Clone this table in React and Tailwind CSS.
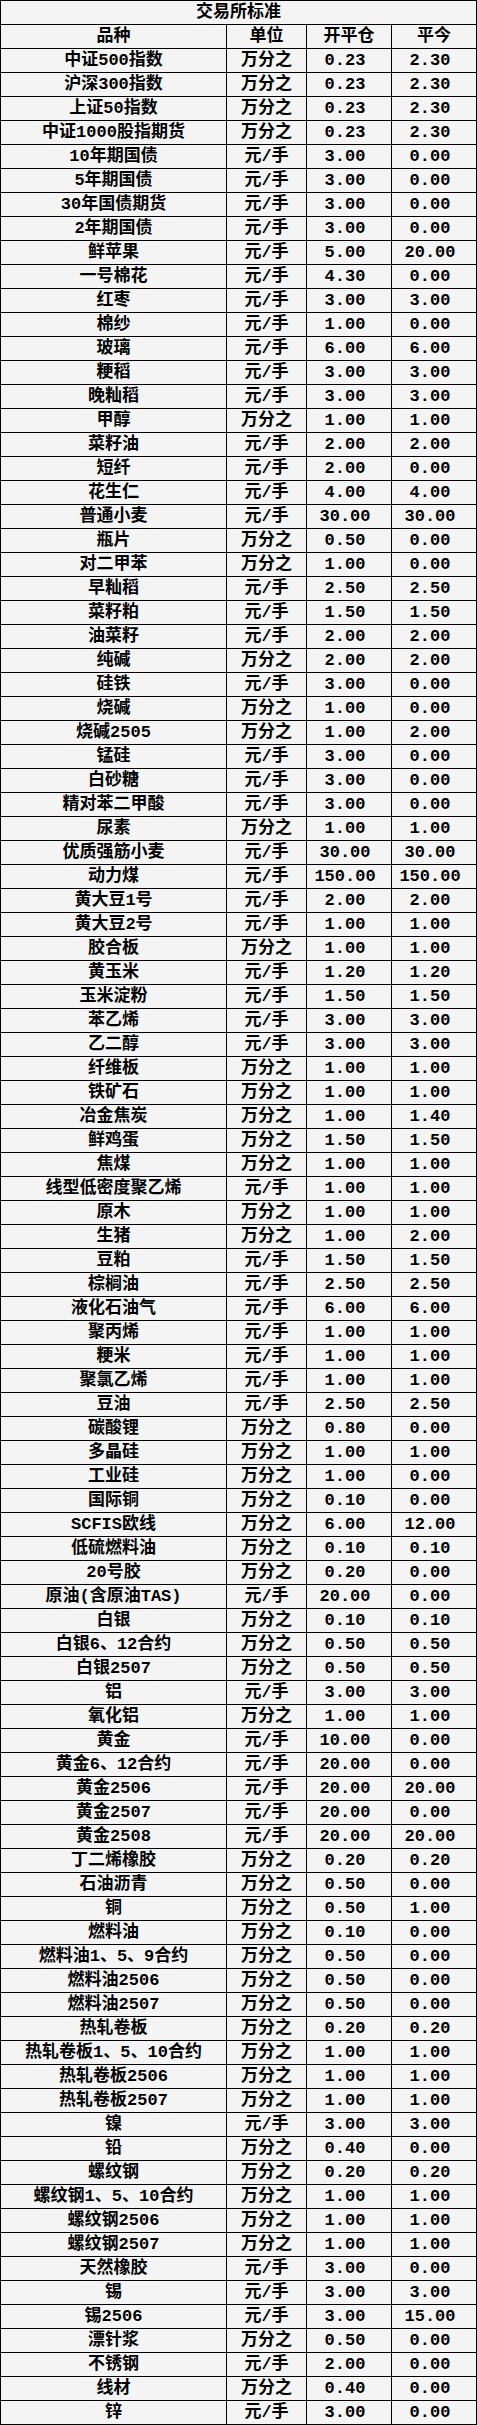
import React from 'react';

const rows = [
  ['中证500指数', '万分之', '0.23', '2.30'],
  ['沪深300指数', '万分之', '0.23', '2.30'],
  ['上证50指数', '万分之', '0.23', '2.30'],
  ['中证1000股指期货', '万分之', '0.23', '2.30'],
  ['10年期国债', '元/手', '3.00', '0.00'],
  ['5年期国债', '元/手', '3.00', '0.00'],
  ['30年国债期货', '元/手', '3.00', '0.00'],
  ['2年期国债', '元/手', '3.00', '0.00'],
  ['鲜苹果', '元/手', '5.00', '20.00'],
  ['一号棉花', '元/手', '4.30', '0.00'],
  ['红枣', '元/手', '3.00', '3.00'],
  ['棉纱', '元/手', '1.00', '0.00'],
  ['玻璃', '元/手', '6.00', '6.00'],
  ['粳稻', '元/手', '3.00', '3.00'],
  ['晚籼稻', '元/手', '3.00', '3.00'],
  ['甲醇', '万分之', '1.00', '1.00'],
  ['菜籽油', '元/手', '2.00', '2.00'],
  ['短纤', '元/手', '2.00', '0.00'],
  ['花生仁', '元/手', '4.00', '4.00'],
  ['普通小麦', '元/手', '30.00', '30.00'],
  ['瓶片', '万分之', '0.50', '0.00'],
  ['对二甲苯', '万分之', '1.00', '0.00'],
  ['早籼稻', '元/手', '2.50', '2.50'],
  ['菜籽粕', '元/手', '1.50', '1.50'],
  ['油菜籽', '元/手', '2.00', '2.00'],
  ['纯碱', '万分之', '2.00', '2.00'],
  ['硅铁', '元/手', '3.00', '0.00'],
  ['烧碱', '万分之', '1.00', '0.00'],
  ['烧碱2505', '万分之', '1.00', '2.00'],
  ['锰硅', '元/手', '3.00', '0.00'],
  ['白砂糖', '元/手', '3.00', '0.00'],
  ['精对苯二甲酸', '元/手', '3.00', '0.00'],
  ['尿素', '万分之', '1.00', '1.00'],
  ['优质强筋小麦', '元/手', '30.00', '30.00'],
  ['动力煤', '元/手', '150.00', '150.00'],
  ['黄大豆1号', '元/手', '2.00', '2.00'],
  ['黄大豆2号', '元/手', '1.00', '1.00'],
  ['胶合板', '万分之', '1.00', '1.00'],
  ['黄玉米', '元/手', '1.20', '1.20'],
  ['玉米淀粉', '元/手', '1.50', '1.50'],
  ['苯乙烯', '元/手', '3.00', '3.00'],
  ['乙二醇', '元/手', '3.00', '3.00'],
  ['纤维板', '万分之', '1.00', '1.00'],
  ['铁矿石', '万分之', '1.00', '1.00'],
  ['冶金焦炭', '万分之', '1.00', '1.40'],
  ['鲜鸡蛋', '万分之', '1.50', '1.50'],
  ['焦煤', '万分之', '1.00', '1.00'],
  ['线型低密度聚乙烯', '元/手', '1.00', '1.00'],
  ['原木', '万分之', '1.00', '1.00'],
  ['生猪', '万分之', '1.00', '2.00'],
  ['豆粕', '元/手', '1.50', '1.50'],
  ['棕榈油', '元/手', '2.50', '2.50'],
  ['液化石油气', '元/手', '6.00', '6.00'],
  ['聚丙烯', '元/手', '1.00', '1.00'],
  ['粳米', '元/手', '1.00', '1.00'],
  ['聚氯乙烯', '元/手', '1.00', '1.00'],
  ['豆油', '元/手', '2.50', '2.50'],
  ['碳酸锂', '万分之', '0.80', '0.00'],
  ['多晶硅', '万分之', '1.00', '1.00'],
  ['工业硅', '万分之', '1.00', '0.00'],
  ['国际铜', '万分之', '0.10', '0.00'],
  ['SCFIS欧线', '万分之', '6.00', '12.00'],
  ['低硫燃料油', '万分之', '0.10', '0.10'],
  ['20号胶', '万分之', '0.20', '0.00'],
  ['原油(含原油TAS)', '元/手', '20.00', '0.00'],
  ['白银', '万分之', '0.10', '0.10'],
  ['白银6、12合约', '万分之', '0.50', '0.50'],
  ['白银2507', '万分之', '0.50', '0.50'],
  ['铝', '元/手', '3.00', '3.00'],
  ['氧化铝', '万分之', '1.00', '1.00'],
  ['黄金', '元/手', '10.00', '0.00'],
  ['黄金6、12合约', '元/手', '20.00', '0.00'],
  ['黄金2506', '元/手', '20.00', '20.00'],
  ['黄金2507', '元/手', '20.00', '0.00'],
  ['黄金2508', '元/手', '20.00', '20.00'],
  ['丁二烯橡胶', '万分之', '0.20', '0.20'],
  ['石油沥青', '万分之', '0.50', '0.00'],
  ['铜', '万分之', '0.50', '1.00'],
  ['燃料油', '万分之', '0.10', '0.00'],
  ['燃料油1、5、9合约', '万分之', '0.50', '0.00'],
  ['燃料油2506', '万分之', '0.50', '0.00'],
  ['燃料油2507', '万分之', '0.50', '0.00'],
  ['热轧卷板', '万分之', '0.20', '0.20'],
  ['热轧卷板1、5、10合约', '万分之', '1.00', '1.00'],
  ['热轧卷板2506', '万分之', '1.00', '1.00'],
  ['热轧卷板2507', '万分之', '1.00', '1.00'],
  ['镍', '元/手', '3.00', '3.00'],
  ['铅', '万分之', '0.40', '0.00'],
  ['螺纹钢', '万分之', '0.20', '0.20'],
  ['螺纹钢1、5、10合约', '万分之', '1.00', '1.00'],
  ['螺纹钢2506', '万分之', '1.00', '1.00'],
  ['螺纹钢2507', '万分之', '1.00', '1.00'],
  ['天然橡胶', '元/手', '3.00', '0.00'],
  ['锡', '元/手', '3.00', '3.00'],
  ['锡2506', '元/手', '3.00', '15.00'],
  ['漂针浆', '万分之', '0.50', '0.00'],
  ['不锈钢', '元/手', '2.00', '0.00'],
  ['线材', '万分之', '0.40', '0.00'],
  ['锌', '元/手', '3.00', '0.00'],
];

const cell = 'flex items-center justify-center border-r border-b border-black whitespace-nowrap';

function Row({ name, unit, open, today, header }) {
  return (
    <div className="grid grid-cols-[227px_80px_85px_85px] h-[24px]">
      <div className={`${cell} border-l`}>{name}</div>
      <div className={cell}>{unit}</div>
      <div className={`${cell} ${header ? '' : 'pr-2'}`}>{open}</div>
      <div className={`${cell} ${header ? '' : 'pr-2'}`}>{today}</div>
    </div>
  );
}

export default function App() {
  return (
    <div
      className="w-[477px] bg-[#f4f4f4] text-black text-[17px] font-bold leading-none"
      style={{ fontFamily: '"Liberation Mono", "Noto Sans CJK SC", monospace' }}
    >
      <div className="h-[25px] flex items-center justify-center border border-black">交易所标准</div>
      <Row name="品种" unit="单位" open="开平仓" today="平今" header />
      {rows.map(([name, unit, open, today]) => (
        <Row key={name} name={name} unit={unit} open={open} today={today} />
      ))}
    </div>
  );
}
